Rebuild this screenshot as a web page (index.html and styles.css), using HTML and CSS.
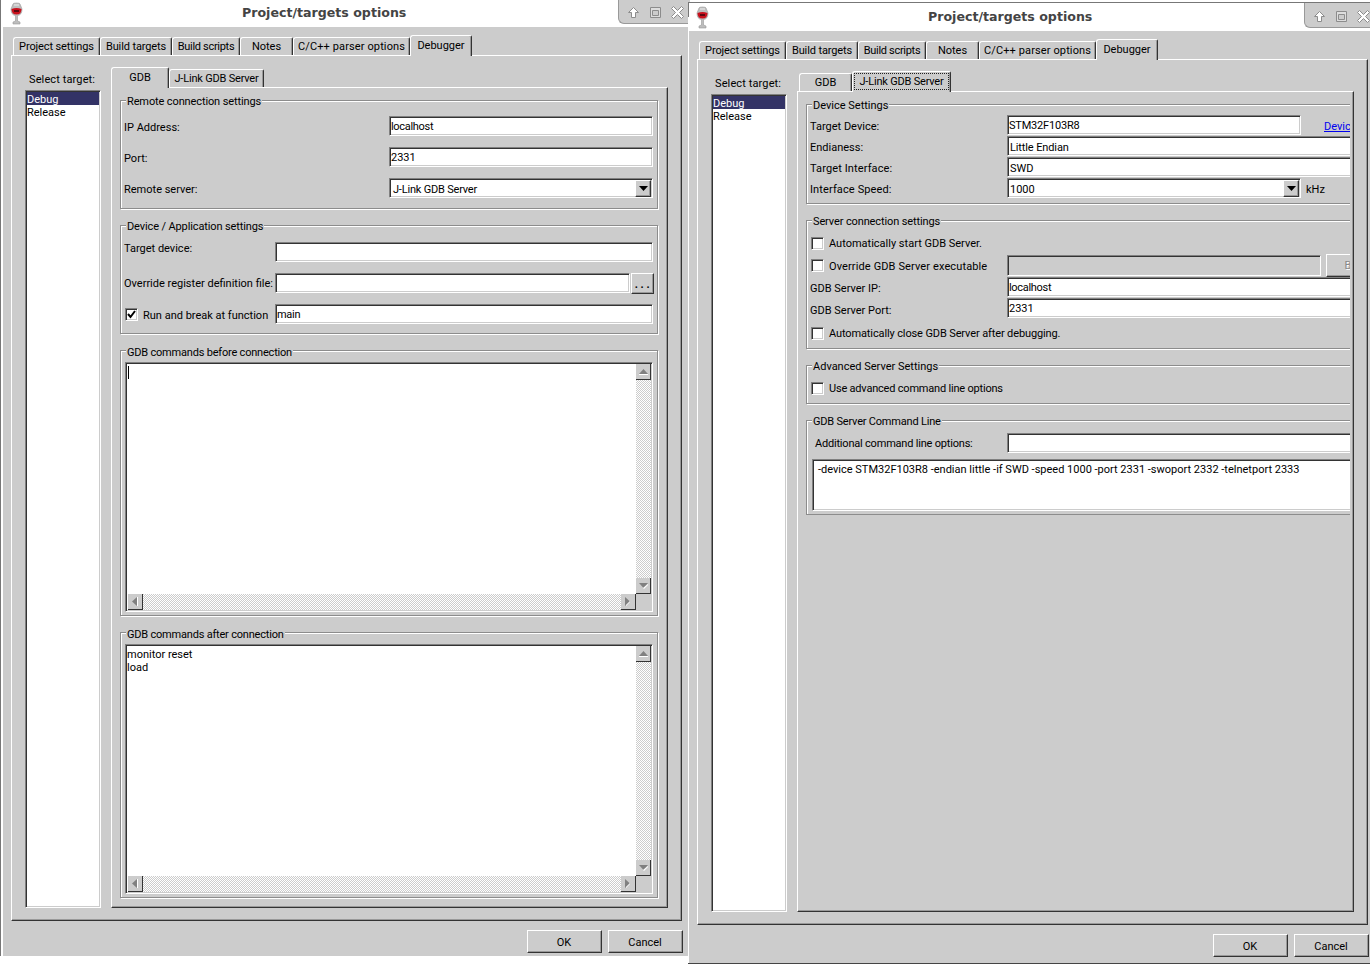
FILE: index.html
```html
<!DOCTYPE html>
<html lang="en">
<head>
<meta charset="utf-8">
<title>Project/targets options</title>
<link rel="stylesheet" href="styles.css">
</head>
<body>
<svg class="defs" width="0" height="0">
  <symbol id="wine" viewBox="0 0 13 24">
    <path d="M3 3 Q3 2 6.500 2 Q10 2 10 3 L12 8 Q12 14 7.500 14.500 L7.500 20 L10 21 L10 23 L3 23 L3 21 L5.500 20 L5.500 14.500 Q1 14 1 8Z" fill="#bdbdbd" stroke="#999" stroke-width=".6"/>
    <path d="M1.500 8 Q6.500 6 11.500 8 Q11.500 13.500 6.500 13.500 Q1.500 13.500 1.500 8Z" fill="#c8101c"/>
    <path d="M4 9 H9 V11 H4Z" fill="#5a0710"/>
    <path d="M4 4 L9 4" stroke="#eee" stroke-width="1"/>
  </symbol>
  <symbol id="up" viewBox="0 0 11 11"><path d="M5.500 .5 L10.500 5.500 L7.500 5.500 L7.500 10.500 L3.500 10.500 L3.500 5.500 L.5 5.500Z" fill="#fff" stroke="#8c8c8c"/></symbol>
  <symbol id="max" viewBox="0 0 11 11"><path d="M.5 .5 H10.500 V10.500 H.5Z M2.500 3.500 H8.500 V8.500 H2.500Z" fill="#ddd" fill-rule="evenodd" stroke="#8c8c8c"/></symbol>
  <symbol id="close" viewBox="0 0 13 13"><path d="M2.500 .5 L6.500 4.500 L10.500 .5 L12.500 2.500 L8.500 6.500 L12.500 10.500 L10.500 12.500 L6.500 8.500 L2.500 12.500 L.5 10.500 L4.500 6.500 L.5 2.500Z" fill="#fff" stroke="#8c8c8c"/></symbol>
  <symbol id="a-up" viewBox="0 0 9 6"><path d="M0 5 H9 V6 H0Z" fill="#fff"/><path d="M4.500 0 L9 5 H0Z" fill="#808080"/></symbol>
  <symbol id="a-down" viewBox="0 0 9 6"><path d="M0 0 H9 L4.500 5Z" fill="#808080"/><path d="M4 5 L9 1 V2 L5 6Z" fill="#fff"/></symbol>
  <symbol id="a-left" viewBox="0 0 6 9"><path d="M5 0 V9 L0 4.500Z" fill="#808080"/><path d="M5 0 H6 V9 H5Z" fill="#fff"/></symbol>
  <symbol id="a-right" viewBox="0 0 6 9"><path d="M0 0 L5 4.500 L0 9Z" fill="#808080"/><path d="M1 8 L5 4 V5 L1 9Z" fill="#fff"/></symbol>
  <symbol id="a-drop" viewBox="0 0 9 5"><path d="M0 0 H9 L4.500 5Z" fill="#000"/></symbol>
  <symbol id="tick" viewBox="0 0 11 11"><path d="M2 5 L4.500 8 L9 2" fill="none" stroke="#000" stroke-width="2"/></symbol>
</svg>

<section class="window window-a">
  <header class="titlebar">
    <svg class="wine"><use href="#wine"/></svg>
    <h1 class="title">Project/targets options</h1>
    <div class="controls">
      <svg class="ctl-up"><use href="#up"/></svg>
      <svg class="ctl-max"><use href="#max"/></svg>
      <svg class="ctl-close"><use href="#close"/></svg>
    </div>
  </header>
  <div class="body">
    <nav class="tabs outer-tabs">
      <div class="tab ls-1">Project settings</div>
      <div class="tab ls-1">Build targets</div>
      <div class="tab ls-3">Build scripts</div>
      <div class="tab">Notes</div>
      <div class="tab ls-plus">C/C++ parser options</div>
      <div class="tab active">Debugger</div>
    </nav>
    <div class="panel outer-panel">
      <aside class="targets">
        <div class="targets-label ls-plus">Select target:</div>
        <div class="listbox sunken">
          <div class="item selected">Debug</div>
          <div class="item">Release</div>
        </div>
      </aside>
      <div class="main">
        <nav class="tabs inner-tabs inner-tabs-a">
          <div class="tab active">GDB</div>
          <div class="tab ls-2">J-Link GDB Server</div>
        </nav>
        <div class="panel inner-panel">
          <div class="stack">
            <div class="group g-remote">
              <span class="legend ls-1">Remote connection settings</span>
              <div class="row r-a"><div class="lbl w-265">IP Address:</div><div class="field sunken grow ls-3">localhost</div></div>
              <div class="row r-a"><div class="lbl w-265">Port:</div><div class="field sunken grow">2331</div></div>
              <div class="row"><div class="lbl w-265">Remote server:</div>
                <div class="field field-low combo sunken grow ls-2">J-Link GDB Server<div class="drop raised"><svg class="a-drop"><use href="#a-drop"/></svg></div></div>
              </div>
            </div>
            <div class="group g-device">
              <span class="legend ls-1">Device / Application settings</span>
              <div class="row r-a"><div class="lbl lbl-high w-151">Target device:</div><div class="field sunken grow"></div></div>
              <div class="row r-a"><div class="lbl lbl-flat w-151">Override register definition file:</div><div class="field sunken grow"></div><div class="btn raised dots">...</div></div>
              <div class="row"><div class="check sunken check-a"><svg class="tick"><use href="#tick"/></svg></div><div class="lbl w-run">Run and break at function</div><div class="field sunken grow ls-3">main</div></div>
            </div>
            <div class="group g-text">
              <span class="legend ls-2">GDB commands before connection</span>
              <div class="editor sunken">
                <div class="editor-text"><span class="caret"></span></div>
                <div class="vbar"><div class="sb raised-sb"><svg class="ah"><use href="#a-up"/></svg></div><div class="track"></div><div class="sb raised-sb"><svg class="ah"><use href="#a-down"/></svg></div></div>
                <div class="hbar"><div class="sb raised-sb"><svg class="av"><use href="#a-left"/></svg></div><div class="track"></div><div class="sb raised-sb"><svg class="av"><use href="#a-right"/></svg></div></div>
                <div class="corner"></div>
              </div>
            </div>
            <div class="group g-text">
              <span class="legend ls-2">GDB commands after connection</span>
              <div class="editor sunken">
                <div class="editor-text"><div>monitor reset</div><div>load</div></div>
                <div class="vbar"><div class="sb raised-sb"><svg class="ah"><use href="#a-up"/></svg></div><div class="track"></div><div class="sb raised-sb"><svg class="ah"><use href="#a-down"/></svg></div></div>
                <div class="hbar"><div class="sb raised-sb"><svg class="av"><use href="#a-left"/></svg></div><div class="track"></div><div class="sb raised-sb"><svg class="av"><use href="#a-right"/></svg></div></div>
                <div class="corner"></div>
              </div>
            </div>
          </div>
        </div>
      </div>
    </div>
    <footer class="footer"><div class="btn raised push">OK</div><div class="btn raised push">Cancel</div></footer>
  </div>
</section>

<section class="window window-b">
  <header class="titlebar">
    <svg class="wine"><use href="#wine"/></svg>
    <h1 class="title">Project/targets options</h1>
    <div class="controls">
      <svg class="ctl-up"><use href="#up"/></svg>
      <svg class="ctl-max"><use href="#max"/></svg>
      <svg class="ctl-close"><use href="#close"/></svg>
    </div>
  </header>
  <div class="body">
    <nav class="tabs outer-tabs">
      <div class="tab ls-1">Project settings</div>
      <div class="tab ls-1">Build targets</div>
      <div class="tab ls-3">Build scripts</div>
      <div class="tab">Notes</div>
      <div class="tab ls-plus">C/C++ parser options</div>
      <div class="tab active">Debugger</div>
    </nav>
    <div class="panel outer-panel">
      <aside class="targets">
        <div class="targets-label ls-plus">Select target:</div>
        <div class="listbox sunken">
          <div class="item selected">Debug</div>
          <div class="item">Release</div>
        </div>
      </aside>
      <div class="main">
        <nav class="tabs inner-tabs inner-tabs-b">
          <div class="tab">GDB</div>
          <div class="tab active"><span class="focus ls-2">J-Link GDB Server</span></div>
        </nav>
        <div class="panel inner-panel">
          <div class="stack stack-clip">
            <div class="group wide-group g-devset">
              <span class="legend">Device Settings</span>
              <div class="row r-b"><div class="lbl w-197">Target Device:</div><div class="field sunken w-294 ls-2">STM32F103R8</div><a class="link">Devic</a></div>
              <div class="row r-b"><div class="lbl w-197">Endianess:</div><div class="field field-low pad-2 sunken w-400 ls-1">Little Endian</div></div>
              <div class="row r-b"><div class="lbl w-197 ls-plus">Target Interface:</div><div class="field field-low pad-2 sunken w-400">SWD</div></div>
              <div class="row r-b"><div class="lbl w-197 ls-plus">Interface Speed:</div><div class="field field-low pad-2 sunken w-294">1000<div class="drop raised"><svg class="a-drop"><use href="#a-drop"/></svg></div></div><div class="unit">kHz</div></div>
            </div>
            <div class="group wide-group g-server">
              <span class="legend ls-1">Server connection settings</span>
              <div class="row r-check"><div class="check sunken"></div><div class="lbl">Automatically start GDB Server.</div></div>
              <div class="row r-exe"><div class="check sunken"></div><div class="lbl w-183 ls-plus">Override GDB Server executable</div><div class="field field-off sunken">&nbsp;</div><div class="btn raised browse">B</div></div>
              <div class="row r-ip"><div class="lbl w-197">GDB Server IP:</div><div class="field sunken w-400 ls-3">localhost</div></div>
              <div class="row r-port"><div class="lbl lbl-low w-197">GDB Server Port:</div><div class="field sunken w-400">2331</div></div>
              <div class="row r-check"><div class="check sunken"></div><div class="lbl ls-1">Automatically close GDB Server after debugging.</div></div>
            </div>
            <div class="group wide-group g-adv">
              <span class="legend">Advanced Server Settings</span>
              <div class="row r-check"><div class="check sunken"></div><div class="lbl ls-2">Use advanced command line options</div></div>
            </div>
            <div class="group wide-group g-cmd">
              <span class="legend ls-2">GDB Server Command Line</span>
              <div class="row"><div class="lbl lbl-flat w-192 ls-2">Additional command line options:</div><div class="field sunken w-400"></div></div>
              <div class="cmdline sunken">-device STM32F103R8 -endian little -if SWD -speed 1000 -port 2331 -swoport 2332 -telnetport 2333</div>
            </div>
          </div>
        </div>
      </div>
    </div>
    <footer class="footer"><div class="btn raised push">OK</div><div class="btn raised push">Cancel</div></footer>
  </div>
</section>
</body>
</html>
```

FILE: styles.css
```css
* { box-sizing: border-box; }
html, body { margin: 0; padding: 0; }
body {
  position: relative;
  width: 1370px;
  height: 964px;
  overflow: hidden;
  background: #fff;
  font: 11px/13px Roboto, "Liberation Sans", Arial, sans-serif;
  color: #000;
}
.defs { position: absolute; }

/* small width corrections for individual strings */
.ls-1 { letter-spacing: -.12px; }
.ls-2 { letter-spacing: -.2px; }
.ls-3 { letter-spacing: -.3px; }
.ls-plus { letter-spacing: .12px; }

/* windows on the desktop */
.window {
  position: absolute;
  display: flex;
  flex-direction: column;
  overflow: hidden;
  background: #fff;
  border-top: 1px solid #777;
  padding-left: 3px;
}
.window::before {
  content: "";
  position: absolute;
  z-index: 2;
  left: 0;
  top: 0;
  bottom: 0;
  width: 1px;
  background: #777;
}
.window-a { left: 0; top: -2px; width: 690px; height: 958px; }
.window-b { left: 688px; top: 2px; width: 682px; height: 962px; border-bottom: 1px solid #444; padding-left: 1px; }
.window-b::before { bottom: auto; height: 14px; }

.titlebar {
  position: relative;
  flex: none;
  height: 28px;
  margin-left: -3px;
  padding-left: 10px;
  display: flex;
  align-items: center;
  background: #fff;
}
.window-b .titlebar { margin-left: -1px; padding-left: 8px; }
.wine { flex: none; width: 13px; height: 24px; }
.title {
  margin: 0 0 0 219px;
  font: bold 12.6px/16px "DejaVu Sans", sans-serif;
  color: #444;
  white-space: nowrap;
}
.controls {
  position: absolute;
  left: 618px;
  top: 0;
  width: 76px;
  height: 25px;
  display: flex;
  align-items: center;
  background: #ccc;
  border-left: 1px solid #999;
  border-bottom: 1px solid #999;
  border-bottom-left-radius: 6px;
  padding: 2px 0 0 9px;
}
.window-b .controls { left: 616px; }
.ctl-up { width: 11px; height: 11px; }
.ctl-max { width: 11px; height: 11px; margin-left: 11px; }
.ctl-close { width: 13px; height: 13px; margin-left: 10px; }

.body {
  flex: 1;
  min-height: 0;
  padding-left: 8px;
  background: #ccc;
  display: flex;
  flex-direction: column;
}

/* tabs */
.tabs { display: grid; align-items: end; flex: none; height: 20px; position: relative; z-index: 1; }
.outer-tabs {
  margin-top: 8px;
  margin-left: 2px;
  grid-template-columns: 87px 72px 68px 53px 117px 62px;
}
.inner-tabs-a { grid-template-columns: 58px 95px; }
.inner-tabs-b { margin-left: 2px; grid-template-columns: 53px 99px; }
.tab {
  height: 18px;
  display: flex;
  align-items: center;
  justify-content: center;
  background: #ccc;
  white-space: nowrap;
  border-top: 1px solid #fff;
  border-left: 1px solid #fff;
  border-right: 1px solid #333;
  border-top-left-radius: 3px;
  border-top-right-radius: 2px;
  box-shadow: inset -1px 0 0 #999;
}
.tab.active { height: 21px; margin-bottom: -1px; padding-bottom: 1px; }
.focus {
  width: 95px;
  height: 17px;
  outline: 1px dotted #222;
  outline-offset: -1px;
  display: flex;
  align-items: center;
  justify-content: center;
}

/* panels */
.panel {
  background: #ccc;
  border: 1px solid;
  border-color: #fff #333 #333 #fff;
  box-shadow: inset -1px -1px 0 #999;
}
.outer-panel {
  flex: none;
  width: 671px;
  height: 866px;
  display: flex;
  padding: 11px 13px 12px 13px;
}
.targets { flex: none; width: 76px; margin-right: 10px; display: flex; flex-direction: column; }
.targets-label { flex: none; height: 23px; padding: 6px 0 0 4px; white-space: nowrap; }
.listbox { flex: 1; background: #fff; padding: 1px; }
.item { height: 13px; padding-top: 1px; white-space: nowrap; }
.item.selected { background: #333366; color: #fff; }

.sunken {
  border: 1px solid;
  border-color: #808080 #fff #fff #808080;
  box-shadow: inset 1px 1px 0 #333, inset -1px -1px 0 #ccc;
}
.raised {
  border: 1px solid;
  border-color: #fff #333 #333 #fff;
  box-shadow: inset -1px -1px 0 #999;
  background: #ccc;
}

.main { flex: none; width: 557px; display: flex; flex-direction: column; }
.inner-panel { flex: 1; padding: 12px 8px 0 8px; }
.stack { display: flex; flex-direction: column; gap: 16px; width: 539px; }
.stack-clip { width: 544px; overflow: hidden; padding-top: 7px; margin-top: -7px; }

/* groups */
.group {
  position: relative;
  flex: none;
  border: 1px solid #8c8c8c;
  box-shadow: 1px 1px 0 #fff, inset 1px 1px 0 #fff;
  margin-right: 1px;
  padding: 15px 4px 10px 3px;
}
.legend {
  position: absolute;
  left: 5px;
  top: -6px;
  padding: 0 1px;
  background: #ccc;
  white-space: nowrap;
}
.g-remote { height: 109px; }
.g-device { height: 109px; padding-top: 16px; }
.g-text { height: 266px; padding: 11px 4px 3px 4px; display: flex; }
.g-text .legend { top: -5px; }
.wide-group { width: 600px; }
.g-devset { height: 100px; padding-top: 10px; }
.g-server { height: 129px; }
.g-adv { height: 39px; }
.g-cmd { height: 95px; padding: 12px 0 0 5px; }

.row { display: flex; align-items: center; height: 20px; }
.r-a { margin-bottom: 11px; }
.r-b { margin-bottom: 1px; }
.r-check { height: 14px; }
.r-exe { height: 23px; margin-top: 4px; }
.r-ip { height: 21px; }
.r-ip .field { align-self: flex-start; }
.r-port { margin-bottom: 8px; }
.lbl { flex: none; padding-top: 2px; white-space: nowrap; }
.r-check .lbl { padding-top: 0; }
.lbl-flat { padding-top: 0; }
.lbl-high { padding-top: 0; margin-bottom: 8px; }
.lbl-low { padding-top: 0; margin-top: 4px; }
.w-265 { width: 265px; }
.w-151 { width: 151px; }
.w-197 { width: 197px; }
.w-192 { width: 192px; margin-left: 3px; }
.w-183 { width: 178px; }
.w-run { width: 132px; }
.grow { flex: 1; min-width: 0; }
.w-294 { flex: none; width: 294px; }
.w-400 { flex: none; width: 400px; }

.field {
  position: relative;
  height: 20px;
  background: #fff;
  padding: 3px 0 0 1px;
  white-space: nowrap;
}
.field-low { padding-top: 4px; }
.field-off { flex: none; width: 314px; height: 21px; background: #ccc; }
.combo { padding-left: 3px; }
.pad-2 { padding-left: 2px; }
.drop {
  position: absolute;
  right: 1px;
  top: 1px;
  width: 16px;
  height: 17px;
  display: flex;
  align-items: center;
  justify-content: center;
}
.a-drop { width: 9px; height: 5px; }
.link { margin-left: 23px; padding-top: 2px; color: #0000ee; text-decoration: underline; white-space: nowrap; }
.unit { margin-left: 5px; padding-top: 2px; }

.btn { display: flex; align-items: center; justify-content: center; flex: none; white-space: nowrap; }
.dots {
  width: 23px;
  height: 21px;
  margin: 0 -1px 0 1px;
  padding: 3px 0 0 2px;
  font-weight: bold;
  letter-spacing: 2.6px;
}
.browse { width: 44px; height: 23px; margin-left: 5px; color: #888; text-shadow: 1px 1px 0 #fff; }

.check {
  flex: none;
  width: 13px;
  height: 13px;
  margin: 0 5px 0 1px;
  background: #fff;
  display: flex;
  align-items: center;
  justify-content: center;
}
.check-a { margin-left: 1px; }
.tick { width: 11px; height: 11px; }

/* multi-line editors */
.editor {
  flex: 1;
  background: #fff;
  padding: 1px;
  display: grid;
  grid-template-columns: 1fr 15px;
  grid-template-rows: 1fr 16px;
  min-height: 0;
}
.editor-text { padding-top: 2px; white-space: nowrap; min-width: 0; }
.caret { display: block; width: 1px; height: 13px; margin-left: 1px; background: #000; }
.vbar { display: flex; flex-direction: column; min-height: 0; }
.hbar { display: flex; padding-left: 1px; }
.track {
  flex: 1;
  background: repeating-conic-gradient(#fff 0 25%, #ccc 0 50%) 0 0 / 2px 2px;
}
.sb {
  flex: none;
  width: 15px;
  height: 16px;
  display: flex;
  align-items: center;
  justify-content: center;
}
.raised-sb { background: #ccc; border-right: 1px solid #333; border-bottom: 1px solid #333; }
.ah { width: 9px; height: 6px; }
.av { width: 6px; height: 9px; }
.corner { background: #ccc; }

.cmdline {
  width: 590px;
  height: 52px;
  margin-top: 6px;
  background: #fff;
  padding: 3px 0 0 5px;
  white-space: nowrap;
}

/* dialog buttons */
.footer { flex: none; display: flex; gap: 6px; margin: 9px 0 0 516px; }
.push { width: 75px; height: 23px; padding-top: 2px; padding-right: 1px; }
```
